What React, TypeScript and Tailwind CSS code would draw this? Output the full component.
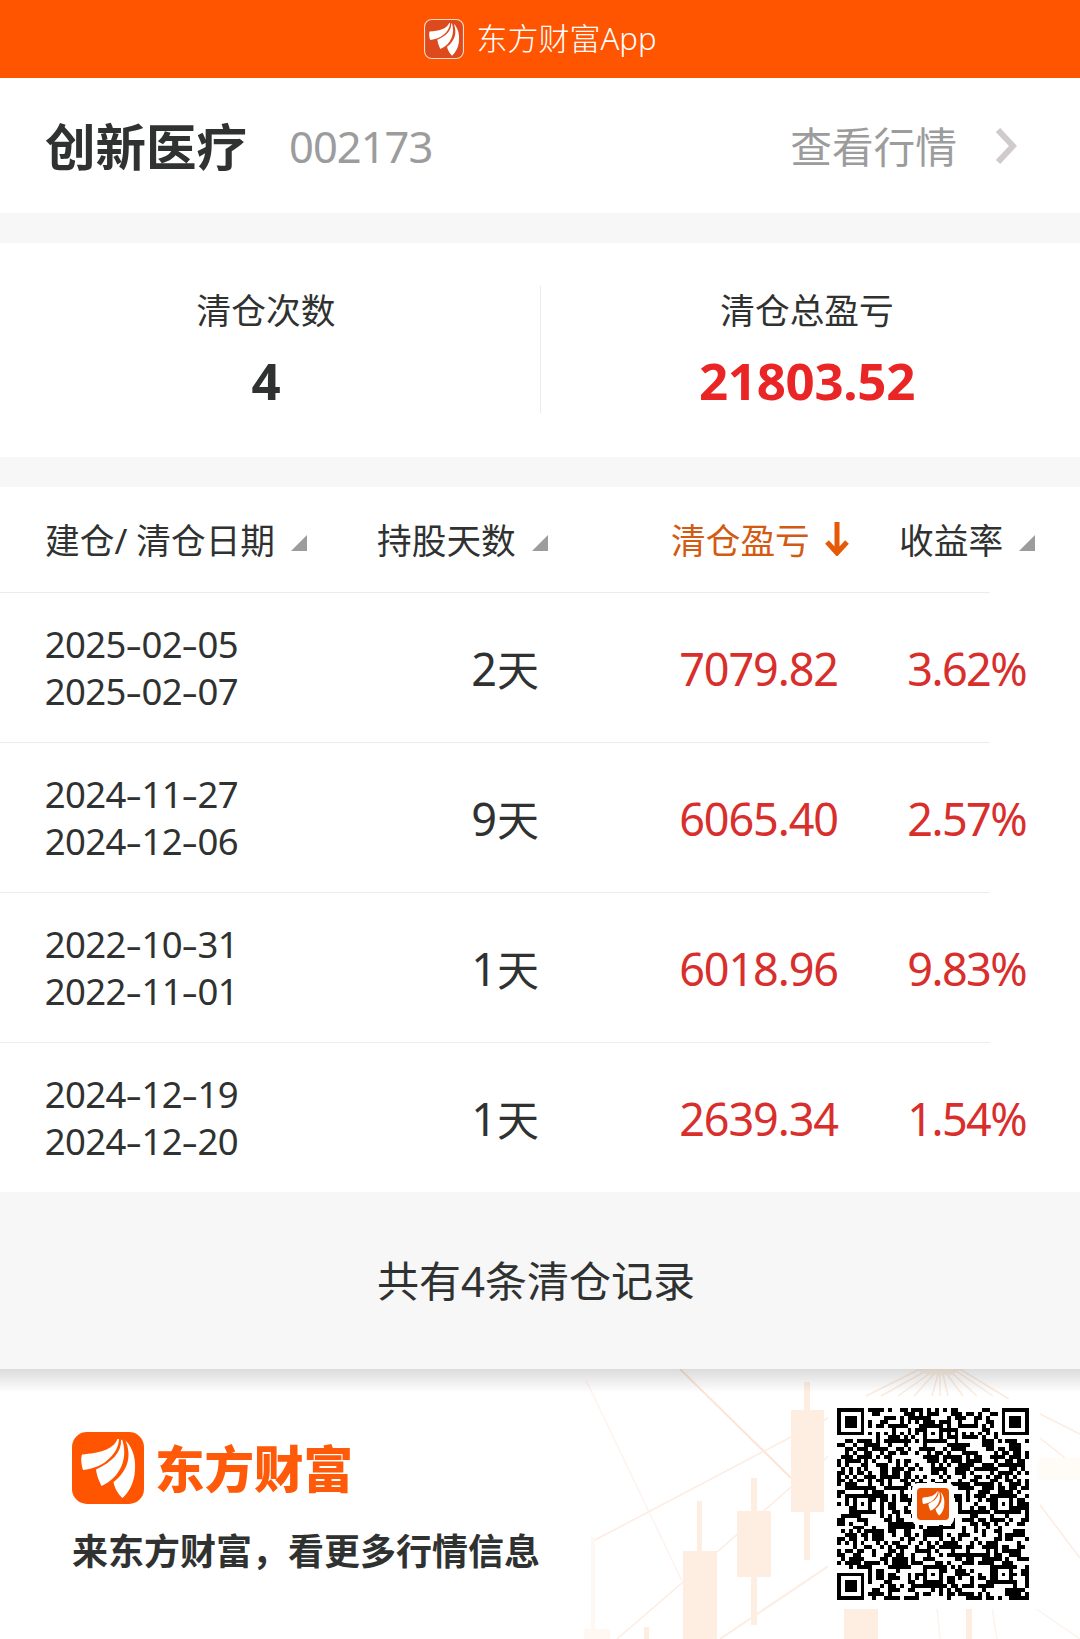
import { ReactNode } from 'react';

interface ClearRecord {
  open: string;
  close: string;
  days: number;
  profit: string;
  rate: string;
}

const records: ClearRecord[] = [
  { open: '2025-02-05', close: '2025-02-07', days: 2, profit: '7079.82', rate: '3.62%' },
  { open: '2024-11-27', close: '2024-12-06', days: 9, profit: '6065.40', rate: '2.57%' },
  { open: '2022-10-31', close: '2022-11-01', days: 1, profit: '6018.96', rate: '9.83%' },
  { open: '2024-12-19', close: '2024-12-20', days: 1, profit: '2639.34', rate: '1.54%' },
];

function Feathers() {
  return (
    <g fill="#fff">
      <path d="M45.5 7C41 18 27 21 10 22.500C8.500 27 9.500 33 11 38C21 36.500 29 34 35 28.500C42 22.500 46.500 16 47 7Z" />
      <path d="M49 7.500C50 20 40 30 24 37.500C24.500 43 27 49 29.500 54C39 49.500 46 42.500 49.500 34C53 26 53 17 50.500 8.500Z" />
      <path d="M53.500 8.500C60 24 56 39 41.500 50C42.500 56 46 62 50.500 66C57 60 61 52 62.500 43C64.500 29 62 17 53.500 8.500Z" />
    </g>
  );
}

function SortMark() {
  return (
    <svg width="16" height="16" viewBox="0 0 16 16" className="block shrink-0">
      <path d="M16 0V16H0Z" fill="#9c9c9c" />
    </svg>
  );
}

function DateText({ value }: { value: string }) {
  return (
    <div className="flex">
      {value.split('').map((ch, i) =>
        ch === '-' ? (
          <span key={i} className="w-[15.5px] scale-x-140 text-center">-</span>
        ) : (
          <span key={i} className="flex w-[20.3px] justify-center">{ch}</span>
        )
      )}
    </div>
  );
}

function Stat({ label, children }: { label: string; children: ReactNode }) {
  return (
    <div className="flex flex-1 flex-col items-center">
      <div className="text-[34.7px] leading-[40px]">{label}</div>
      {children}
    </div>
  );
}

const QR_SIZE = 49;

function inFinder(r: number, c: number) {
  const top = r < 8;
  const left = c < 8;
  return (top && left) || (top && c > QR_SIZE - 9) || (left && r > QR_SIZE - 9);
}

function ring(r: number, c: number, cr: number, cc: number) {
  return Math.max(Math.abs(r - cr), Math.abs(c - cc));
}

function isDark(r: number, c: number) {
  if (inFinder(r, c)) {
    const d = ring(r, c, r < 8 ? 3 : QR_SIZE - 4, c < 8 ? 3 : QR_SIZE - 4);
    return d <= 1 || d === 3;
  }
  for (const [ar, ac] of [[6, 24], [24, 6], [24, 42], [42, 24], [42, 42]]) {
    const d = ring(r, c, ar, ac);
    if (d <= 2) return d !== 1;
  }
  if (r === 6 || c === 6) return (r + c) % 2 === 0;
  let h = (r * 374761393 + c * 668265263) | 0;
  h = Math.imul(h ^ (h >>> 13), 1274126177);
  return ((h ^ (h >>> 16)) & 255) < 136;
}

function QrCode() {
  let d = '';
  for (let r = 0; r < QR_SIZE; r++) {
    for (let c = 0; c < QR_SIZE; c++) {
      if (isDark(r, c)) d += `M${c} ${r}h1v1h-1z`;
    }
  }
  return (
    <svg width="192" height="192" viewBox="0 0 192 192" className="block">
      <path d={d} transform={`scale(${192 / QR_SIZE})`} shapeRendering="crispEdges" />
      <rect x="75" y="75" width="42" height="42" rx="6" fill="#fff" />
      <rect x="80" y="80" width="32" height="32" rx="4" fill="#eb5503" />
      <g transform="translate(81.5 80.500) scale(0.41)">
        <Feathers />
      </g>
    </svg>
  );
}

// faint candlesticks and trend lines behind the share footer
function ChartBackdrop() {
  return (
    <svg width="540" height="270" viewBox="0 9 540 270" className="absolute top-0 right-0">
      <g stroke="#fdece2" strokeWidth="1.5" fill="none">
        <path d="M46 20L142 221" stroke="#fef3ee" />
        <path d="M140 9L251 118" stroke="#fde4d8" strokeWidth="2" />
        <path d="M55 180L251 77L290 57" />
        <path d="M77 279L142 223L251 127L290 95" />
        <path d="M180 279L290 205" strokeWidth="2" />
        <path d="M380 9L326 36M384 12L341 36M389 14L358 36M394 14L374 36M398 14L392 36M400 14V36M403 14L408 36M407 14L423 36M411 12L437 36M415 10L453 36M420 9L469 39" stroke="#fcebdd" />
        <path d="M500 54L540 74M500 78L540 110M500 145L540 198" />
        <path d="M397 248L400 279M452 248L457 279M495 248L540 279" stroke="#fdf3ee" />
      </g>
      <path d="M375 9H422L412 15H388Z" fill="#fdf1e6" />
      <g fill="#feeee2">
        <path d="M157 141h5v50h-5zM143 191h34v88h-34z" />
        <path d="M211 118h6v33h-6zM197 151h34v66h-34zM211 217h6v48h-6z" />
        <path d="M264 22h6v28h-6zM251 50h33v102h-33zM264 152h6v48h-6z" />
        <path d="M304 249h34v30h-34zM426 249h6v30h-6zM104 267h5v12h-5z" />
      </g>
      <path d="M51 177h4v92h15v10H44v-10h7z" fill="#fff8f2" />
      <path d="M498 98h42v22h-42z" fill="#fffcf8" />
    </svg>
  );
}

export default function App() {
  return (
    <div className="w-[1080px] bg-white font-['Noto_Sans','Noto_Sans_CJK_SC',sans-serif] text-[#303231]">
      <header className="flex h-[78px] items-center justify-center gap-[13px] bg-[#ff5400] text-white">
        <svg width="40" height="40" viewBox="0 0 72 72">
          <rect x="1" y="1" width="70" height="70" rx="13" fill="#dc4a1d" stroke="#ffd9c4" strokeWidth="2" />
          <Feathers />
        </svg>
        <span className="pb-[2px] text-[31px] leading-none font-light">东方财富App</span>
      </header>

      <div className="flex h-[135px] items-center pr-[63px] pl-[45px] leading-none">
        <h1 className="pt-[3px] text-[50.5px] font-bold">创新医疗</h1>
        <span className="mt-[2px] ml-[42px] text-[43.500px] tracking-[-1px] text-[#9c9c9c]">002173</span>
        <span className="mt-[2px] ml-auto text-[41.700px] text-[#9c9c9c]">查看行情</span>
        <svg width="22" height="36" viewBox="0 0 22 36" className="ml-[38px]">
          <path d="M3 2L18 18L3 34" fill="none" stroke="#cfcacb" strokeWidth="6" />
        </svg>
      </div>

      <div className="h-[30px] bg-[#f7f7f7]" />

      <section className="flex h-[214px] items-start pt-[48px]">
        <div className="flex flex-1 pr-[8px]">
          <Stat label="清仓次数">
            <div className="mt-[19px] text-[51px] leading-[60px] font-bold">4</div>
          </Stat>
        </div>
        <div className="-mt-[5px] h-[127px] w-px bg-[#ececec]" />
        <div className="flex flex-1 pr-[7px]">
          <Stat label="清仓总盈亏">
            <div className="mt-[19px] text-[51px] leading-[60px] font-bold tracking-[-0.3px] text-[#e92525]">21803.52</div>
          </Stat>
        </div>
      </section>

      <div className="h-[30px] bg-[#f7f7f7]" />

      <section>
        <div className="flex h-[105px] items-center pl-[45px] text-[34.7px] leading-none">
          <div className="flex w-[332px] items-center">
            <span className="pt-[3px] whitespace-pre">建仓/ 清仓日期</span>
            <span className="mt-[8px] ml-[16px]"><SortMark /></span>
          </div>
          <div className="flex w-[294px] items-center">
            <span className="pt-[3px]">持股天数</span>
            <span className="mt-[8px] ml-[16px]"><SortMark /></span>
          </div>
          <div className="flex w-[228px] items-center text-[#d35a12]">
            <span className="pt-[3px]">清仓盈亏</span>
            <svg width="24" height="34" viewBox="0 0 24 34" className="ml-[15px]">
              <path d="M12 0V31M2 20L12 31L22 20" fill="none" stroke="#e75a05" strokeWidth="5" />
            </svg>
          </div>
          <div className="flex items-center">
            <span className="pt-[3px]">收益率</span>
            <span className="mt-[8px] ml-[16px]"><SortMark /></span>
          </div>
        </div>

        {records.map((item) => (
          <div key={item.open}>
            <div className="h-px w-[990px] bg-[#ececec]" />
            <div className="flex h-[149px] items-center pl-[45px]">
              <div className="w-[300px] text-[36.500px] leading-[47px]">
                <DateText value={item.open} />
                <DateText value={item.close} />
              </div>
              <div className="flex w-[194px] items-baseline justify-end pt-[2px]">
                <span className="text-[45px]">{item.days}</span>
                <span className="text-[42px]">天</span>
              </div>
              <div className="w-[299px] pt-[2px] text-right text-[45px] tracking-[-1.1px] text-[#d82f2d]">{item.profit}</div>
              <div className="w-[188px] pt-[2px] text-right text-[45px] tracking-[-1.6px] text-[#d82f2d]">{item.rate}</div>
            </div>
          </div>
        ))}
      </section>

      <div className="flex h-[177px] items-center justify-center bg-[#f7f7f7] pt-[1px] pr-[8px] text-[42px] leading-none">
        共有4条清仓记录
      </div>

      <footer className="relative h-[270px] overflow-hidden">
        <ChartBackdrop />
        <div className="absolute inset-x-0 top-0 h-[24px] bg-linear-to-b from-black/14 to-transparent" />
        <div className="relative flex justify-between pr-[42px] pl-[72px]">
          <div className="pt-[63px]">
            <div className="flex items-center">
              <svg width="72" height="72" viewBox="0 0 72 72">
                <rect width="72" height="72" rx="15" fill="#ff5400" />
                <Feathers />
              </svg>
              <span className="mt-[3px] ml-[11px] text-[49.500px] leading-none font-black text-[#ff5a0a]">东方财富</span>
            </div>
            <div className="mt-[28px] text-[36px] leading-[40px] font-bold">来东方财富，看更多行情信息</div>
          </div>
          <div className="mt-[30px] bg-white p-[9px]">
            <QrCode />
          </div>
        </div>
      </footer>
    </div>
  );
}
